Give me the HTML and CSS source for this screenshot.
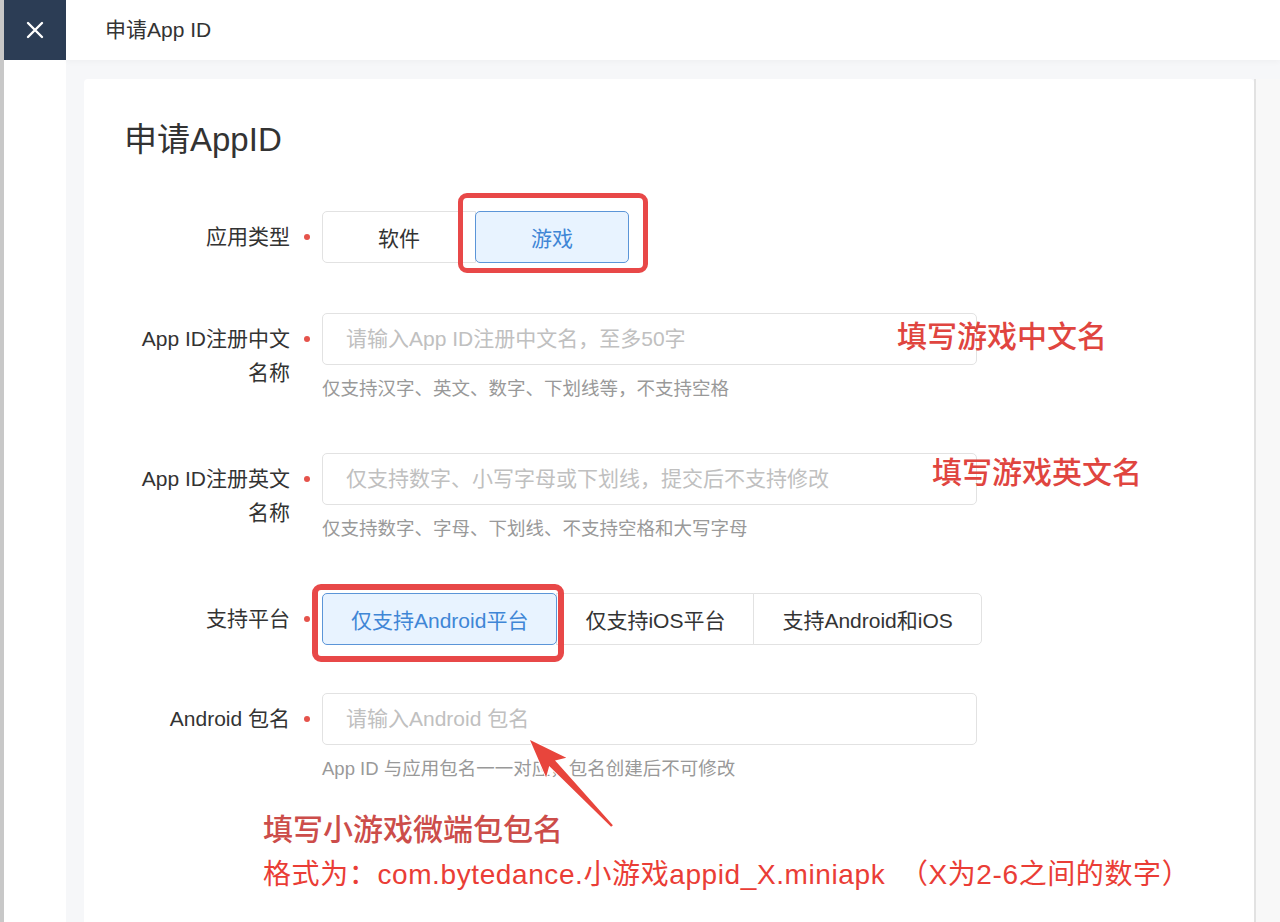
FILE: index.html
```html
<!DOCTYPE html>
<html lang="zh-CN">
<head>
    <meta charset="UTF-8">
    <meta name="viewport" content="width=device-width, initial-scale=1.0">
    <title>申请App ID</title>
    <link rel="stylesheet" href="styles.css">
</head>
<body>
    <div class="page">
        <div class="edge"></div>
        <div class="side">
            <div class="close">
                <svg width="18" height="18" viewBox="0 0 18 18">
                    <path d="M2 2 L16 16 M16 2 L2 16" stroke="#fff" stroke-width="2.4" stroke-linecap="round"/>
                </svg>
            </div>
        </div>
        <div class="main">
            <div class="topbar">申请App ID</div>
            <div class="content">
                <div class="card">
                    <h1 class="card-title">申请AppID</h1>

                    <div class="form-item">
                        <div class="label">应用类型</div>
                        <span class="dot"></span>
                        <div class="control">
                            <div class="btn-group">
                                <button class="opt opt-type">软件</button>
                                <button class="opt opt-type active">游戏</button>
                            </div>
                            <div class="mark mark-type"></div>
                        </div>
                    </div>

                    <div class="form-item">
                        <div class="label">App ID注册中文<br>名称</div>
                        <span class="dot"></span>
                        <div class="control">
                            <input class="input" type="text" placeholder="请输入App ID注册中文名，至多50字">
                            <div class="help">仅支持汉字、英文、数字、下划线等，不支持空格</div>
                            <div class="note note-cn">填写游戏中文名</div>
                        </div>
                    </div>

                    <div class="form-item">
                        <div class="label">App ID注册英文<br>名称</div>
                        <span class="dot"></span>
                        <div class="control">
                            <input class="input" type="text" placeholder="仅支持数字、小写字母或下划线，提交后不支持修改">
                            <div class="help">仅支持数字、字母、下划线、不支持空格和大写字母</div>
                            <div class="note note-en">填写游戏英文名</div>
                        </div>
                    </div>

                    <div class="form-item tight">
                        <div class="label">支持平台</div>
                        <span class="dot"></span>
                        <div class="control">
                            <div class="btn-group">
                                <button class="opt active">仅支持Android平台</button>
                                <button class="opt">仅支持iOS平台</button>
                                <button class="opt">支持Android和iOS</button>
                            </div>
                            <div class="mark mark-platform"></div>
                        </div>
                    </div>

                    <div class="form-item last">
                        <div class="label">Android 包名</div>
                        <span class="dot"></span>
                        <div class="control">
                            <input class="input" type="text" placeholder="请输入Android 包名">
                            <div class="help">App ID 与应用包名一一对应，包名创建后不可修改</div>
                            <svg class="arrow" width="100" height="100" viewBox="0 0 100 100">
                                <polygon points="8,7 44.3,24.8 33,27.4 90.9,92.2 89.1,93.8 27.2,33 24.1,44.2" fill="#e8453c" stroke="#fff" stroke-width="2" stroke-linejoin="round" paint-order="stroke"/>
                            </svg>
                        </div>
                    </div>

                    <div class="notes">
                        <div class="note-title">填写小游戏微端包包名</div>
                        <div class="note-format">格式为：com.bytedance.小游戏appid_X.miniapk　（X为2-6之间的数字）</div>
                    </div>
                </div>
                <div class="track"></div>
            </div>
        </div>
    </div>
</body>
</html>
```

FILE: styles.css
```css
* {
    margin: 0;
    padding: 0;
    box-sizing: border-box;
}

body {
    font-family: "Liberation Sans", "Noto Sans CJK SC", sans-serif;
    color: #333;
    background: #fff;
    overflow: hidden;
}

.page {
    display: flex;
    height: 100vh;
}

.edge {
    width: 4px;
    background: #c8c8c8;
}

.side {
    width: 62px;
    background: #fff;
}

.close {
    height: 60px;
    background: #2c3d55;
    display: flex;
    align-items: center;
    justify-content: center;
}

.main {
    flex: 1;
    display: flex;
    flex-direction: column;
}

.topbar {
    height: 60px;
    line-height: 60px;
    padding-left: 39px;
    font-size: 21px;
    color: #333;
    background: #fff;
    box-shadow: 0 2px 6px rgba(0, 0, 0, 0.03);
    position: relative;
    z-index: 1;
}

.content {
    flex: 1;
    display: flex;
    background: #f6f7f9;
    padding: 19px 0 0 18px;
}

.card {
    flex: 1;
    background: #fff;
    border-radius: 4px 4px 0 0;
    padding: 40px 0 0 40px;
}

.track {
    width: 26px;
    background: #f8f8f8;
    border-left: 2px solid #e2e2e2;
}

.card-title {
    font-size: 33px;
    font-weight: normal;
    line-height: 42px;
    color: #333;
    margin-bottom: 50px;
}

.form-item {
    display: flex;
    align-items: flex-start;
    margin-bottom: 50px;
}

.form-item.tight {
    margin-bottom: 48px;
}

.form-item.last {
    margin-bottom: 0;
}

.label {
    width: 166px;
    text-align: right;
    font-size: 21px;
    line-height: 34px;
    padding-top: 9px;
    color: #333;
}

.dot {
    width: 6px;
    height: 6px;
    border-radius: 50%;
    background: #e5534b;
    margin: 23px 12px 0 14px;
}

.control {
    position: relative;
    width: 655px;
}

.input {
    display: block;
    width: 655px;
    height: 52px;
    border: 1px solid #e2e2e2;
    border-radius: 5px;
    padding: 0 23px;
    font-family: inherit;
    font-size: 21px;
    color: #333;
    outline: none;
}

.input::placeholder {
    color: #c0c0c0;
}

.help {
    margin-top: 10px;
    line-height: 28px;
    font-size: 18.5px;
    color: #999;
}

.btn-group {
    display: flex;
}

.opt {
    flex-shrink: 0;
    white-space: nowrap;
    height: 52px;
    padding: 0 28px;
    border: 1px solid #e2e2e2;
    background: #fff;
    font-family: inherit;
    font-size: 21px;
    color: #333;
    margin-left: -1px;
    cursor: pointer;
}

.opt:first-child {
    margin-left: 0;
    border-radius: 5px 0 0 5px;
}

.opt:last-child {
    border-radius: 0 5px 5px 0;
}

.opt-type {
    width: 154px;
    padding: 0;
}

.opt.active {
    background: #e8f3ff;
    border-color: #5b95d8;
    color: #3f86d6;
    border-radius: 5px;
    position: relative;
}

.mark {
    position: absolute;
    border: 5px solid #e84848;
    border-radius: 9px;
}

.mark-type {
    left: 136px;
    top: -18px;
    width: 190px;
    height: 80px;
}

.mark-platform {
    left: -10px;
    top: -9px;
    width: 252px;
    height: 78px;
    border-width: 6px;
}

.note {
    position: absolute;
    font-size: 30px;
    font-weight: 500;
    line-height: 40px;
    color: #e0453f;
    white-space: nowrap;
}

.note-cn {
    left: 575px;
    top: 4px;
}

.note-en {
    left: 610px;
    top: 0;
}

.arrow {
    position: absolute;
    left: 200px;
    top: 40px;
}

.notes {
    margin-top: 27px;
    padding-left: 139px;
}

.note-title {
    font-size: 30px;
    line-height: 40px;
    color: #cc4d4a;
    font-weight: 500;
}

.note-format {
    margin-top: 3px;
    font-size: 28px;
    letter-spacing: 0.6px;
    line-height: 44px;
    color: #ea3d36;
    white-space: nowrap;
}
```
